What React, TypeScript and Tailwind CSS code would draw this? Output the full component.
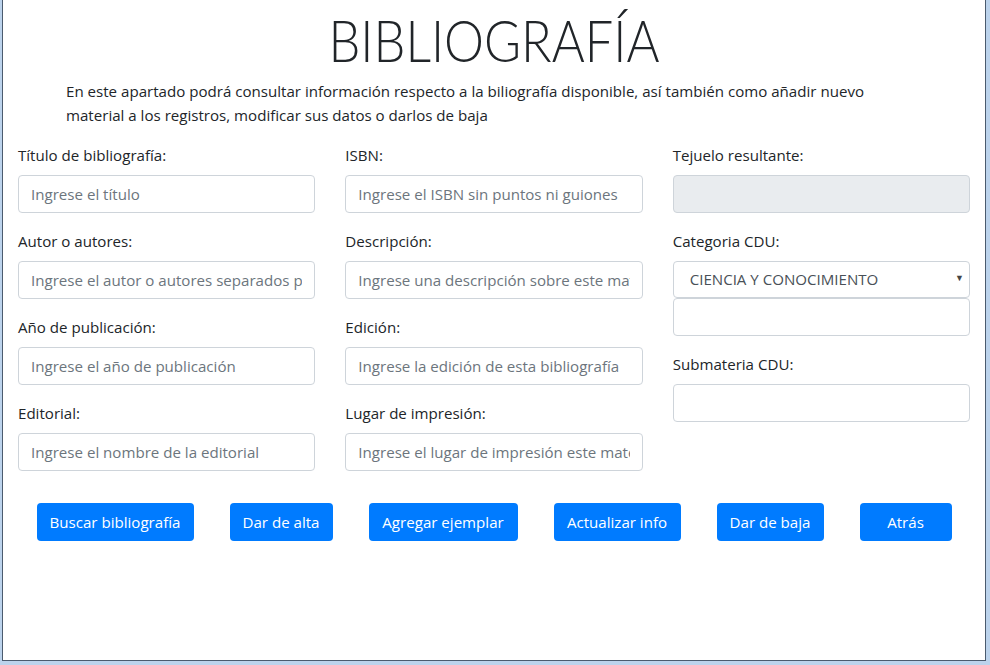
import React from "react";

const font = { fontFamily: '"Open Sans", "Noto Sans", sans-serif' };
const titleFont = { fontFamily: 'Lato, "Open Sans", sans-serif' };

function Field({ label, placeholder }: { label: string; placeholder: string }) {
  return (
    <div className="mb-4">
      <label className="block mb-2 text-[15.1px] leading-6 text-[#212529]">{label}</label>
      <input
        className="block w-full h-[38px] px-3 border border-[#ced4da] rounded-[4px] text-[15.1px] text-[#495057] placeholder:text-[#6c757d] bg-white outline-none"
        placeholder={placeholder}
      />
    </div>
  );
}

export default function App() {
  const buttons: [string, string][] = [
    ["Buscar bibliografía", "w-[157px]"],
    ["Dar de alta", "w-[103px]"],
    ["Agregar ejemplar", "w-[149px]"],
    ["Actualizar info", "w-[127px]"],
    ["Dar de baja", "w-[107px]"],
    ["Atrás", "w-[92px]"],
  ];
  return (
    <div className="w-[990px] h-[665px] bg-[#bcd3ec] pl-[2px] pr-[4px] pb-[4px]" style={font}>
      <div className="h-full bg-white border-x border-b border-[#4b5b6e] flex flex-col">
        <h1
          className="h-[79px] text-center text-[58px] font-light leading-[80px] text-[#212529] scale-x-[0.87]"
          style={titleFont}
        >
          BIBLIOGRAFÍA
        </h1>
        <p className="pl-[63px] text-[15.1px] leading-6 text-[#212529]">
          <span className="block whitespace-nowrap">
            En este apartado podrá consultar información respecto a la biliografía disponible, así también como añadir nuevo
          </span>
          <span className="block whitespace-nowrap">material a los registros, modificar sus datos o darlos de baja</span>
        </p>
        <div className="grid grid-cols-3 mt-4">
          <div className="px-[15px]">
            <Field label="Título de bibliografía:" placeholder="Ingrese el título" />
            <Field label="Autor o autores:" placeholder="Ingrese el autor o autores separados por coma" />
            <Field label="Año de publicación:" placeholder="Ingrese el año de publicación" />
            <Field label="Editorial:" placeholder="Ingrese el nombre de la editorial" />
          </div>
          <div className="px-[15px]">
            <Field label="ISBN:" placeholder="Ingrese el ISBN sin puntos ni guiones" />
            <Field label="Descripción:" placeholder="Ingrese una descripción sobre este material" />
            <Field label="Edición:" placeholder="Ingrese la edición de esta bibliografía" />
            <Field label="Lugar de impresión:" placeholder="Ingrese el lugar de impresión este material" />
          </div>
          <div className="px-[15px]">
            <div className="mb-4">
              <label className="block mb-2 text-[15.1px] leading-6 text-[#212529]">Tejuelo resultante:</label>
              <input
                disabled
                className="block w-full h-[38px] px-3 border border-[#ced4da] rounded-[4px] bg-[#e9ecef]"
              />
            </div>
            <div className="mb-4">
              <label className="block mb-2 text-[15.1px] leading-6 text-[#212529]">Categoria CDU:</label>
              <div className="relative">
                <div className="h-[37px] w-full border border-[#ced4da] rounded-[4px] bg-white pl-4 flex items-center text-[15.1px] text-[#495057]">
                  CIENCIA Y CONOCIMIENTO
                </div>
                <span className="absolute right-[6px] top-[10px] text-[9px] text-[#444]">▼</span>
              </div>
              <input className="block w-full h-[38px] px-3 border border-[#ced4da] rounded-[4px] bg-white outline-none" />
            </div>
            <div className="mb-4">
              <label className="block mb-2 text-[15.1px] leading-6 text-[#212529]">Submateria CDU:</label>
              <input className="block w-full h-[38px] px-3 border border-[#ced4da] rounded-[4px] bg-white outline-none" />
            </div>
          </div>
        </div>
        <div className="flex justify-center gap-[36px] mt-4">
          {buttons.map(([t, w]) => (
            <button
              key={t}
              className={`${w} h-[38px] rounded-[4px] bg-[#007bff] text-white text-[15.1px] whitespace-nowrap`}
            >
              {t}
            </button>
          ))}
        </div>
      </div>
    </div>
  );
}
